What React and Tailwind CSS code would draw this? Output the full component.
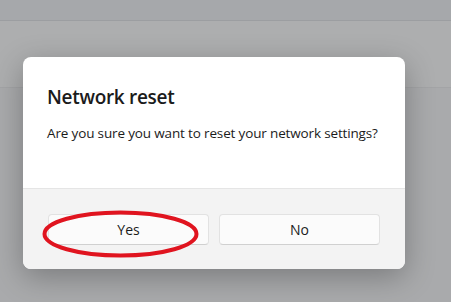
export default function App() {
  return (
    <div
      className="relative h-[302px] w-[451px] overflow-hidden bg-[#a9aaac]"
      style={{ fontFamily: '"Open Sans", "Noto Sans", sans-serif' }}
    >
      <div className="h-[21px] border-b border-[#9c9ea1] bg-[#a6a8ab]" />
      <div className="h-[67px] border-b border-[#a3a4a6] bg-[#adaeaf]" />
      <div className="absolute left-[23px] top-[57px] w-[382px] overflow-hidden rounded-[8px] bg-white shadow-[0_8px_30px_rgba(0,0,0,0.28)]">
        <div className="h-[131px] px-[24px] pt-[26px]">
          <div className="text-[19px] font-semibold leading-[28px] text-[#1b1b1b] tracking-[-0.3px]">
            Network reset
          </div>
          <div className="mt-[12px] text-[13.5px] leading-[20px] text-[#1b1b1b] tracking-[-0.15px]">
            Are you sure you want to reset your network settings?
          </div>
        </div>
        <div className="flex gap-[10px] border-t border-[#e5e5e5] bg-[#f3f3f3] pb-[24px] pl-[25px] pr-[24px] pt-[25px]">
          <div className="relative flex h-[31px] w-[161px] items-center justify-center rounded-[4px] border border-[#e2e2e2] border-b-[#d0d0d0] bg-[#fbfbfb] text-[14px] text-[#1b1b1b]">
            Yes
            <svg
              className="pointer-events-none absolute left-[-7px] top-[-5px]"
              width="158"
              height="49"
              viewBox="0 0 158 49"
            >
              <ellipse cx="78.5" cy="24" rx="76" ry="21.5" fill="none" stroke="#e0141f" strokeWidth="4" />
            </svg>
          </div>
          <div className="flex h-[31px] w-[161px] items-center justify-center rounded-[4px] border border-[#e2e2e2] border-b-[#d0d0d0] bg-[#fbfbfb] text-[14px] text-[#1b1b1b]">
            No
          </div>
        </div>
      </div>
    </div>
  );
}
